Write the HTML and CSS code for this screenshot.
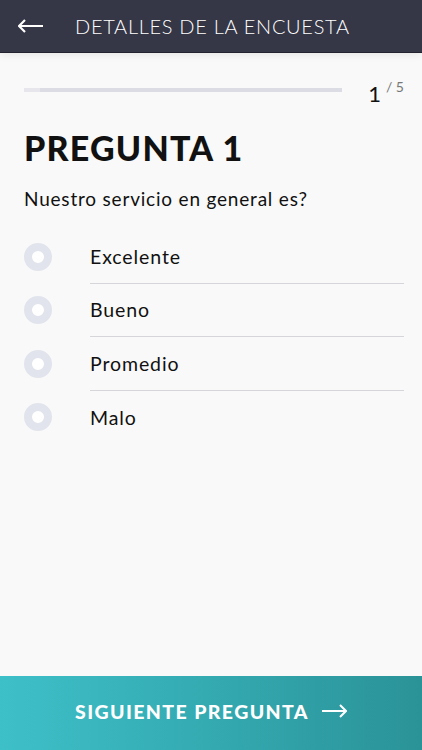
FILE: index.html
```html
<!DOCTYPE html>
<html lang="es">
    <head>
        <meta charset="UTF-8">
        <title>Detalles de la encuesta</title>
        <link rel="stylesheet" href="styles.css">
    </head>
    <body>
      <header class="topbar">
        <span class="back">
          <svg width="26" height="14" viewBox="0 0 26 14"><path d="M7 1 L1 7 L7 13 M1 7 H25" fill="none" stroke="#fff" stroke-width="2.2"/></svg>
        </span>
        <h1 class="title">DETALLES DE LA ENCUESTA</h1>
      </header>
      <main class="survey">
        <div class="progress">
          <div class="track"><div class="fill" style="width: 5%"></div></div>
          <span class="count">1<sup>/ 5</sup></span>
        </div>
        <h2 class="question-num">PREGUNTA 1</h2>
        <p class="question">Nuestro servicio en general es?</p>
        <ul class="options">
          <li class="option"><span class="radio"></span><span class="label">Excelente</span></li>
          <li class="option"><span class="radio"></span><span class="label">Bueno</span></li>
          <li class="option"><span class="radio"></span><span class="label">Promedio</span></li>
          <li class="option"><span class="radio"></span><span class="label">Malo</span></li>
        </ul>
      </main>
      <button type="button" class="next">SIGUIENTE PREGUNTA
        <svg width="26" height="14" viewBox="0 0 26 14"><path d="M19 1 L25 7 L19 13 M25 7 H1" fill="none" stroke="#fff" stroke-width="2"/></svg>
      </button>
    </body>
</html>
```

FILE: styles.css
```css
html, body {
    height: 100%;
}

body {
    margin: 0;
    padding: 0;
    background: #f9f9f9;
    color: #111;
    font-family: Lato, "Open Sans", sans-serif;
    display: flex;
    flex-direction: column;
}

.topbar {
    height: 52px;
    background: #353646;
    border-bottom: 1px solid #22232e;
    display: flex;
    align-items: center;
    box-shadow: 0 2px 8px rgba(0, 0, 0, 0.08);
}

.back {
    display: flex;
    margin-left: 18px;
    width: 57px;
}

.title {
    margin: 0;
    color: #fff;
    font-size: 20px;
    font-weight: 300;
    letter-spacing: 0.7px;
}

.survey {
    flex: 1;
    padding: 0 18px 0 24px;
}

.progress {
    display: flex;
    align-items: center;
    margin-top: 22px;
    height: 26px;
}

.track {
    flex: 1;
    height: 4px;
    background: #dcdce4;
    margin-right: 26px;
    margin-top: 4px;
}

.fill {
    height: 100%;
    background: #e6e6ec;
}

.count {
    font-size: 22px;
    font-weight: 400;
    color: #111;
    margin-top: 8px;
}

.count sup {
    color: #777;
    font-size: 14px;
    margin-left: 5px;
    vertical-align: 10px;
}

.question-num {
    margin: 27px 0 0;
    font-size: 34px;
    font-weight: 900;
    letter-spacing: 1.2px;
    line-height: 40px;
}

.question {
    margin: 20px 0 0;
    font-size: 19px;
    letter-spacing: 0.8px;
    line-height: 22px;
}

.options {
    list-style: none;
    margin: 20px 0 0;
    padding: 0;
}

.option {
    display: flex;
    align-items: center;
    height: 53.5px;
}

.radio {
    box-sizing: border-box;
    width: 28px;
    height: 28px;
    border-radius: 50%;
    border: 8px solid #e1e4ec;
    background: #fff;
    margin-right: 38px;
    flex: none;
}

.label {
    flex: 1;
    align-self: stretch;
    display: flex;
    align-items: center;
    font-size: 19.5px;
    letter-spacing: 0.9px;
    border-bottom: 1px solid #d6d6da;
}

.option:last-child .label {
    border-bottom: 0;
}

.next {
    height: 74px;
    border: 0;
    margin: 0;
    background: linear-gradient(90deg, #3ec0c9, #2a9398);
    color: #fff;
    font-family: Lato, "Open Sans", sans-serif;
    font-size: 19.5px;
    font-weight: 900;
    letter-spacing: 1.4px;
    display: flex;
    align-items: center;
    justify-content: center;
    gap: 12px;
    padding: 0 0 4px;
}
```
